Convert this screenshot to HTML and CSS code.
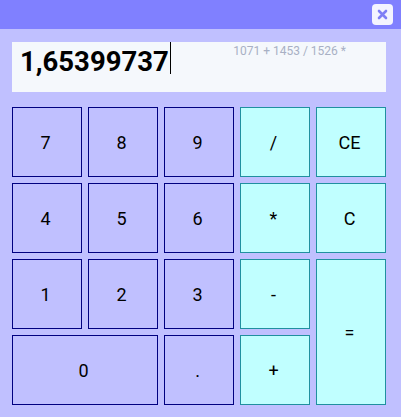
FILE: index.html
```html
<!DOCTYPE html>
<html>
<head>
<meta charset="utf-8">
<link rel="stylesheet" href="styles.css">
</head>
<body>
<div class="calc">
  <div class="titlebar">
    <button class="close" aria-label="Close">
      <svg width="11" height="11" viewBox="0 0 11 11"><path d="M2 2 L9 9 M9 2 L2 9" stroke="#7f7ff5" stroke-width="2.6" stroke-linecap="round"/></svg>
    </button>
  </div>
  <div class="content">
    <div class="display">
      <span class="value">1,65399737</span><span class="caret"></span>
      <span class="expr">1071 + 1453 / 1526 *</span>
    </div>
    <div class="keys">
      <button class="key num">7</button>
      <button class="key num">8</button>
      <button class="key num">9</button>
      <button class="key op">/</button>
      <button class="key op">CE</button>
      <button class="key num">4</button>
      <button class="key num">5</button>
      <button class="key num">6</button>
      <button class="key op">*</button>
      <button class="key op">C</button>
      <button class="key num">1</button>
      <button class="key num">2</button>
      <button class="key num">3</button>
      <button class="key op">-</button>
      <button class="key op eq">=</button>
      <button class="key num zero">0</button>
      <button class="key num">.</button>
      <button class="key op">+</button>
    </div>
  </div>
</div>
</body>
</html>
```
FILE: styles.css
```css
html, body {
  margin: 0;
  padding: 0;
  background: #c0c0ff;
  font-family: Roboto, "Liberation Sans", sans-serif;
}
.calc {
  width: 401px;
  height: 417px;
  background: #c0c0ff;
}
.titlebar {
  height: 29px;
  background: #8080ff;
  display: flex;
  justify-content: flex-end;
  align-items: flex-start;
  padding-right: 8px;
  box-sizing: border-box;
}
.close {
  margin-top: 4px;
  width: 21px;
  height: 21px;
  border: none;
  border-radius: 4px;
  background: #f4f4ff;
  padding: 0;
  display: flex;
  align-items: center;
  justify-content: center;
}
.content {
  padding: 13px 15px 12px 12px;
}
.display {
  position: relative;
  height: 50px;
  background: #f5f8fc;
  display: flex;
  align-items: flex-start;
  padding-left: 8px;
  margin-bottom: 15px;
}
.value {
  font-weight: bold;
  font-size: 27.5px;
  line-height: 1;
  margin-top: 6px;
  color: #000;
}
.caret {
  width: 1px;
  height: 32px;
  background: #000;
  margin-left: 1px;
}
.expr {
  position: absolute;
  right: 40px;
  top: 2px;
  font-size: 12px;
  color: #a8b0c4;
}
.keys {
  display: grid;
  grid-template-columns: repeat(5, 70px);
  grid-template-rows: repeat(4, 70px);
  gap: 6px;
}
.key {
  box-sizing: border-box;
  margin: 0;
  padding: 0 3px 0 0;
  font-family: Roboto, "Liberation Sans", sans-serif;
  font-size: 18px;
  color: #000;
  border-radius: 0;
}
.num {
  background: #c0c0ff;
  border: 1px solid #000080;
}
.op {
  background: #c0ffff;
  border: 1px solid #2090a0;
}
.zero {
  grid-column: span 2;
}
.eq {
  grid-row: span 2;
}
```
